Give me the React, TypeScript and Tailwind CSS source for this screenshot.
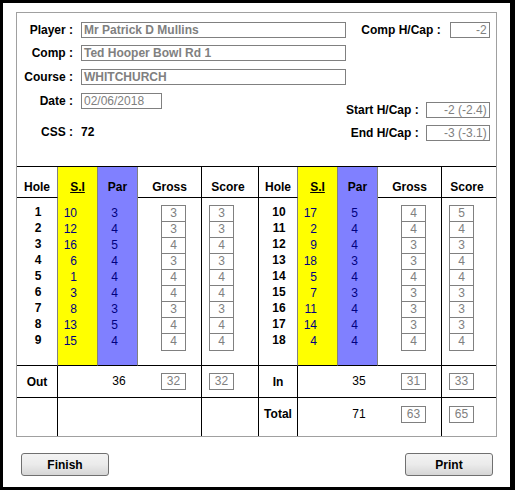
import React from 'react';

const front = {
    holes: [1, 2, 3, 4, 5, 6, 7, 8, 9],
    si: [10, 12, 16, 6, 1, 3, 8, 13, 15],
    par: [3, 4, 5, 4, 4, 4, 3, 5, 4],
    gross: [3, 3, 4, 3, 4, 4, 3, 4, 4],
    score: [3, 3, 4, 3, 4, 4, 3, 4, 4],
};

const back = {
    holes: [10, 11, 12, 13, 14, 15, 16, 17, 18],
    si: [17, 2, 9, 18, 5, 7, 11, 14, 4],
    par: [5, 4, 4, 3, 4, 3, 4, 4, 4],
    gross: [4, 4, 3, 3, 4, 3, 3, 3, 4],
    score: [5, 4, 3, 4, 4, 3, 3, 3, 4],
};

const Field = ({ value, width, bold, right }: { value: string; width: string; bold?: boolean; right?: boolean }) => (
    <div className={`${width} h-[16px] border border-[#808080] bg-white text-[#808080] text-[12px] leading-[15px] px-[2px] whitespace-nowrap overflow-hidden ${bold ? 'font-bold' : 'font-normal'} ${right ? 'text-right' : ''}`}>
        {value}
    </div>
);

const Box = ({ value }: { value: number }) => (
    <div className="w-[25px] h-[17px] border border-[#808080] text-center text-[12px] leading-[15px] text-[#808080]">
        {value}
    </div>
);

const BoxStack = ({ values }: { values: number[] }) => (
    <div className="w-[25px] flex flex-col border border-[#808080] divide-y divide-[#808080]">
        {values.map((v, i) => (
            <div key={i} className="h-[16px] text-center text-[12px] leading-[15px] text-[#808080]">{v}</div>
        ))}
    </div>
);

const Half = ({ d, start }: { d: typeof front; start: number }) => {
    const hdr = 'border-b border-black flex justify-center pt-[12px] text-[12px] leading-[16px] font-bold';
    return (
        <>
            {/* header row */}
            <div className={`${hdr} border-r border-r-[#808080]`} style={{ gridColumnStart: start, gridRowStart: 1 }}>Hole</div>
            <div className="row-span-2 bg-[#ffff00] border-r border-[#808080] border-b border-b-black flex flex-col" style={{ gridColumnStart: start + 1, gridRowStart: 1 }}>
                <div className="h-[30px] flex justify-center pt-[12px] text-[12px] leading-[16px] font-bold underline underline-offset-1">S.I</div>
                <div className="pt-[8px] flex flex-col items-end pr-[20px]">
                    {d.si.map((v, i) => (
                        <div key={i} className="h-[16px] text-[12px] leading-[16px] text-[#000080]">{v}</div>
                    ))}
                </div>
            </div>
            <div className="row-span-2 bg-[#8080ff] border-r border-[#808080] border-b border-b-black flex flex-col" style={{ gridColumnStart: start + 2, gridRowStart: 1 }}>
                <div className="h-[30px] flex justify-center pt-[12px] text-[12px] leading-[16px] font-bold">Par</div>
                <div className="pt-[8px] flex flex-col items-end pr-[19px]">
                    {d.par.map((v, i) => (
                        <div key={i} className="h-[16px] text-[12px] leading-[16px] text-[#000080]">{v}</div>
                    ))}
                </div>
            </div>
            <div className={`${hdr} border-r border-r-black`} style={{ gridColumnStart: start + 3, gridRowStart: 1 }}>Gross</div>
            <div className={`${hdr} ${start === 1 ? 'border-r border-r-black' : ''} pr-[4px]`} style={{ gridColumnStart: start + 4, gridRowStart: 1 }}>Score</div>

            {/* body row */}
            <div className="border-b border-black border-r border-r-[#808080] pt-[7px] flex flex-col items-center pl-[2px]" style={{ gridColumnStart: start, gridRowStart: 2 }}>
                {d.holes.map((h) => (
                    <div key={h} className="h-[16px] text-[12px] leading-[15px] font-bold">{h}</div>
                ))}
            </div>
            <div className="border-b border-black border-r pt-[7px] pl-[23px]" style={{ gridColumnStart: start + 3, gridRowStart: 2 }}>
                <BoxStack values={d.gross} />
            </div>
            <div className={`border-b border-black ${start === 1 ? 'border-r' : ''} pt-[7px] pl-[7px]`} style={{ gridColumnStart: start + 4, gridRowStart: 2 }}>
                <BoxStack values={d.score} />
            </div>
        </>
    );
};

const SumRow = ({ start, row, label, par, gross, score, last }: { start: number; row: number; label?: string; par?: number; gross?: number; score?: number; last?: boolean }) => (
    <>
        <div className={`border-r border-black ${last ? '' : 'border-b'} flex justify-center ${row === 3 ? 'items-center' : 'pt-[8px]'} text-[12px] leading-[16px] font-bold`} style={{ gridColumnStart: start, gridRowStart: row }}>
            {label}
        </div>
        <div className={`col-span-3 border-r border-black ${last ? '' : 'border-b'} grid grid-cols-[40px_40px_64px] ${row === 3 ? 'pt-[7px]' : 'pt-[8px]'}`} style={{ gridColumnStart: start + 1, gridRowStart: row }}>
            <div />
            <div className="text-center text-[12px] leading-[16px] pl-[2px]">{par}</div>
            <div className="pl-[23px]">{gross !== undefined && <Box value={gross} />}</div>
        </div>
        <div className={`${start === 1 ? 'border-r border-black' : ''} ${last ? '' : 'border-b border-b-black'} pl-[7px] ${row === 3 ? 'pt-[7px]' : 'pt-[8px]'}`} style={{ gridColumnStart: start + 4, gridRowStart: row }}>
            {score !== undefined && <Box value={score} />}
        </div>
    </>
);

const Button = ({ children }: { children: React.ReactNode }) => (
    <button className="w-[88px] h-[23px] rounded-[3px] border border-[#707070] bg-gradient-to-b from-[#f3f3f3] via-[#ebebeb] to-[#d6d6d6] text-[12px] font-bold text-black leading-[20px]">
        {children}
    </button>
);

export default function App() {
    return (
        <div className="w-[515px] h-[490px] bg-black pt-[3px] pl-[3px] pr-[5px] pb-[3px] font-['Liberation_Sans',Arial,sans-serif] text-black">
            <div className="w-full h-full bg-white flex flex-col px-[13px] pt-[9px]">
                <div className="w-[481px] h-[425px] border border-[#a0a0a0] flex flex-col">
                    {/* details */}
                    <div className="h-[153px] flex justify-between pr-[7px] text-[12px] leading-[16px] font-bold whitespace-nowrap">
                        <div className="flex flex-col">
                            <div className="flex items-center gap-[8px] h-[16px] mt-[9px]">
                                <span className="w-[56px] text-right">Player :</span>
                                <Field value="Mr Patrick D Mullins" width="w-[265px]" bold />
                            </div>
                            <div className="flex items-center gap-[8px] h-[16px] mt-[7px]">
                                <span className="w-[56px] text-right">Comp :</span>
                                <Field value="Ted Hooper Bowl Rd 1" width="w-[265px]" bold />
                            </div>
                            <div className="flex items-center gap-[8px] h-[16px] mt-[8px]">
                                <span className="w-[56px] text-right">Course :</span>
                                <Field value="WHITCHURCH" width="w-[265px]" bold />
                            </div>
                            <div className="flex items-center gap-[8px] h-[16px] mt-[8px]">
                                <span className="w-[56px] text-right">Date :</span>
                                <Field value="02/06/2018" width="w-[81px]" />
                            </div>
                            <div className="flex items-center gap-[8px] h-[16px] mt-[15px]">
                                <span className="w-[56px] text-right">CSS :</span>
                                <span>72</span>
                            </div>
                        </div>
                        <div className="flex flex-col items-end">
                            <div className="flex items-center gap-[9px] h-[16px] mt-[9px]">
                                <span>Comp H/Cap :</span>
                                <Field value="-2" width="w-[40px]" right />
                            </div>
                            <div className="flex items-center gap-[7px] h-[16px] mt-[64px]">
                                <span>Start H/Cap :</span>
                                <Field value="-2 (-2.4)" width="w-[64px]" right />
                            </div>
                            <div className="flex items-center gap-[7px] h-[16px] mt-[7px]">
                                <span>End H/Cap :</span>
                                <Field value="-3 (-3.1)" width="w-[64px]" right />
                            </div>
                        </div>
                    </div>

                    {/* score grid */}
                    <div className="border-t border-black grid grid-cols-[41px_40px_40px_64px_57px_39px_40px_40px_64px_54px] grid-rows-[31px_168px_32px_38px]">
                        <Half d={front} start={1} />
                        <Half d={back} start={6} />
                        <SumRow start={1} row={3} label="Out" par={36} gross={32} score={32} />
                        <SumRow start={6} row={3} label="In" par={35} gross={31} score={33} />
                        <SumRow start={1} row={4} last />
                        <SumRow start={6} row={4} label="Total" par={71} gross={63} score={65} last />
                    </div>
                </div>

                <div className="flex justify-between mt-[16px] pl-[5px] pr-[4px]">
                    <Button>Finish</Button>
                    <Button>Print</Button>
                </div>
            </div>
        </div>
    );
}
